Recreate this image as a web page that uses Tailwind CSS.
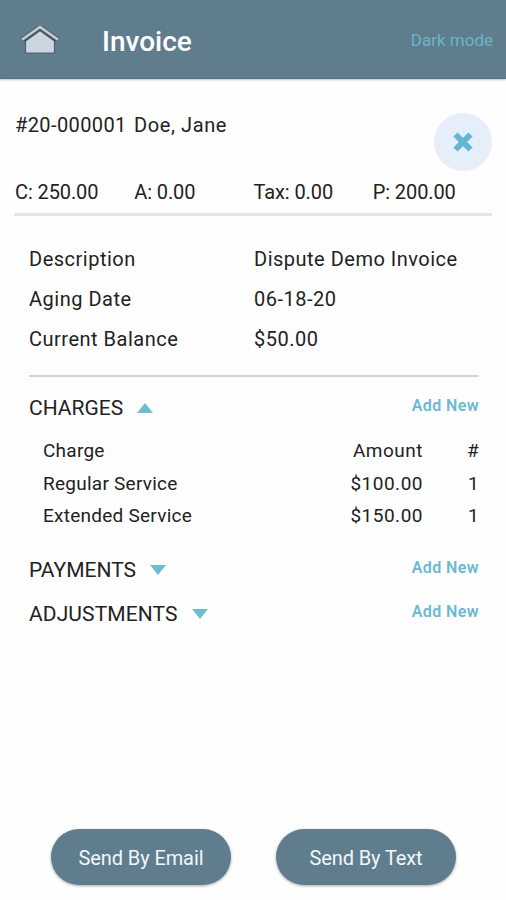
<!DOCTYPE html>
<html lang="en">
<head>
    <meta charset="UTF-8">
    <meta name="viewport" content="width=device-width, initial-scale=1.0">
    <title>Invoice</title>
    <script src="https://cdn.jsdelivr.net/npm/@tailwindcss/browser@4"></script>
</head>
<body class="bg-[#fefefe] font-['Roboto',sans-serif] text-[#222] text-xl">
<div class="h-[900px] flex flex-col overflow-hidden">
    <!-- Header -->
    <header class="h-[79px] shrink-0 bg-[#607d8e] border-b border-[#587282] shadow-[0_1px_2px_rgba(0,0,0,0.25)] flex items-center pl-5 pr-[13px]">
        <svg class="mt-1 w-10 h-8" viewBox="0 0 40 32">
            <path d="M5.500 14L20 4L34.500 14V28H5.500Z" fill="#c9d5df" stroke="#4b606d" stroke-width="1.200"/>
            <path d="M4 15.500L20 4L36 15.500" fill="none" stroke="#3f525e" stroke-width="3.600"/>
            <path d="M1.400 15L20 1.800L38.600 15" fill="none" stroke="#4b606d" stroke-width="4.500"/>
            <path d="M1.900 14.700L20 1.900L38.100 14.700" fill="none" stroke="#c0cdd7" stroke-width="2.600"/>
        </svg>
        <h1 class="ml-[42px] mt-1.5 text-[28px] leading-8 font-medium text-white">Invoice</h1>
        <a href="#" class="ml-auto mt-1 text-[17px] text-[#69b5ca]">Dark mode</a>
    </header>

    <!-- Customer and totals -->
    <section class="mx-[14px] mt-[34px] border-b-3 border-[#e6e6e6] h-[103px] shrink-0">
        <div class="flex justify-between h-[67px]">
            <div class="flex leading-[25px] tracking-[0.4px]">
                <span class="w-[120px] pl-px">#20-000001</span>
                <span class="tracking-[0.6px]">Doe, Jane</span>
            </div>
            <button class="size-[58px] rounded-full bg-[#e5eef9] flex items-center justify-center">
                <svg class="size-5" viewBox="0 0 20 20" stroke="#63b7d5" stroke-width="6">
                    <path d="M2.500 2.500L17.500 17.500M17.500 2.500L2.500 17.500"/>
                </svg>
            </button>
        </div>
        <div class="grid grid-cols-4 pl-px leading-6 tracking-[-0.1px]">
            <span>C: 250.00</span>
            <span>A: 0.00</span>
            <span>Tax: 0.00</span>
            <span>P: 200.00</span>
        </div>
    </section>

    <!-- Details -->
    <section class="ml-[29px] mr-[27px] mt-[23px] pb-4 border-b-2 border-[#d2d2d2] grid grid-cols-2 leading-10 tracking-[0.5px]">
        <span>Description</span><span>Dispute Demo Invoice</span>
        <span>Aging Date</span><span>06-18-20</span>
        <span>Current Balance</span><span>$50.00</span>
    </section>

    <!-- Charges -->
    <section class="ml-[29px] mr-[27px] mt-[17px]">
        <div class="flex items-center h-7">
            <h2 class="mt-0.5 text-[21px]">CHARGES</h2>
            <svg class="ml-[14px] w-4 h-[10px]" viewBox="0 0 16 10"><path d="M0 10L8 0L16 10Z" fill="#6bbdd2"/></svg>
            <a href="#" class="ml-auto -mt-1 text-base font-semibold tracking-[0.4px] text-[#6bb9d2]">Add New</a>
        </div>
        <div class="grid grid-cols-[1fr_auto_56px] mt-[13px] pl-[14px] text-[19px] leading-[32.500px] tracking-[0.25px]">
            <span>Charge</span><span class="text-right tracking-[0.5px]">Amount</span><span class="text-right">#</span>
            <span>Regular Service</span><span class="text-right tracking-[0.5px]">$100.00</span><span class="text-right">1</span>
            <span>Extended Service</span><span class="text-right tracking-[0.5px]">$150.00</span><span class="text-right">1</span>
        </div>
    </section>

    <!-- Payments and adjustments -->
    <section class="ml-[29px] mr-[27px] mt-[15px]">
        <div class="flex items-center h-11">
            <h2 class="mt-0.5 text-[21px]">PAYMENTS</h2>
            <svg class="ml-[14px] w-4 h-[10px]" viewBox="0 0 16 10"><path d="M0 0H16L8 10Z" fill="#6bbdd2"/></svg>
            <a href="#" class="ml-auto -mt-1 text-base font-semibold tracking-[0.4px] text-[#6bb9d2]">Add New</a>
        </div>
        <div class="flex items-center h-11">
            <h2 class="mt-0.5 text-[21px] tracking-[0.1px]">ADJUSTMENTS</h2>
            <svg class="ml-[14px] w-4 h-[10px]" viewBox="0 0 16 10"><path d="M0 0H16L8 10Z" fill="#6bbdd2"/></svg>
            <a href="#" class="ml-auto -mt-1 text-base font-semibold tracking-[0.4px] text-[#6bb9d2]">Add New</a>
        </div>
    </section>

    <!-- Actions -->
    <div class="mt-auto mb-[15px] pl-[51px] flex gap-[45px]">
        <button class="w-[180px] h-14 pt-0.5 rounded-full bg-[#607d8e] text-[#f0f8fa] tracking-[-0.1px] shadow-[0_1px_3px_rgba(0,0,0,0.35)]">Send By Email</button>
        <button class="w-[180px] h-14 pt-0.5 rounded-full bg-[#607d8e] text-[#f0f8fa] tracking-[-0.1px] shadow-[0_1px_3px_rgba(0,0,0,0.35)]">Send By Text</button>
    </div>
</div>
</body>
</html>
